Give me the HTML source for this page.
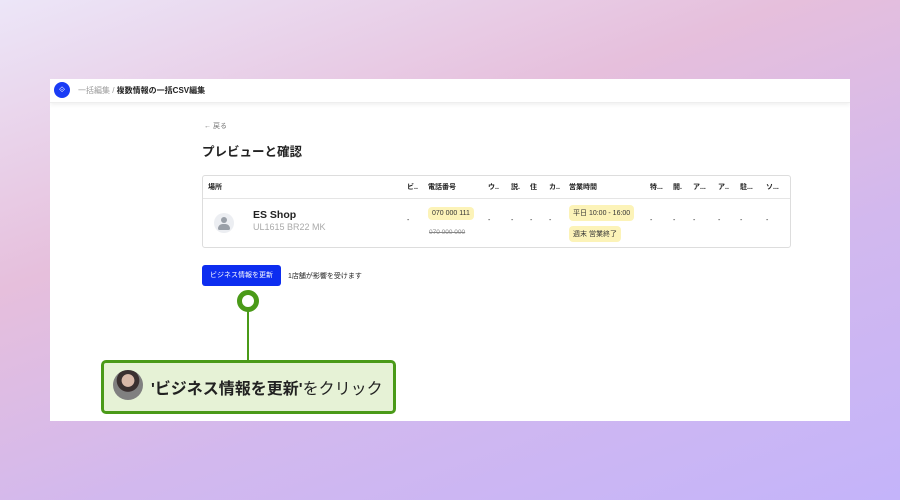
<!DOCTYPE html><html><head><meta charset="utf-8"><style>
*{margin:0;padding:0;box-sizing:border-box}
body{width:900px;height:500px;overflow:hidden;font-family:"Liberation Sans","Noto Sans CJK JP",sans-serif;background:linear-gradient(160deg,#ece6f8 0%,#e6bfdc 35%,#d2b8ee 65%,#c4b4fa 100%);position:relative}
.win{position:absolute;left:50px;top:79px;width:800px;height:342px;background:#fff;overflow:hidden}
.hdr{height:24px;border-bottom:1px solid #eee;box-shadow:0 2px 4px rgba(0,0,0,.06);position:relative;font-size:8px}
.logo{position:absolute;left:4px;top:3px;width:16px;height:16px;border-radius:50%;background:#1a3cf5;color:#fff;font-size:8px;text-align:center;line-height:16px}
.bc{position:absolute;left:28px;top:6px;color:#999}
.bc b{color:#222}
.a{position:absolute;font-size:7px;color:#222;white-space:nowrap}
.h{font-weight:bold}
.tbl{position:absolute;left:152px;top:96px;width:589px;height:73px;border:1px solid #ddd;border-radius:3px}
.hl{position:absolute;left:0;right:0;top:22px;border-top:1px solid #e5e5e5}
.pill{position:absolute;background:#fcf3b8;border-radius:4px;font-size:7px;padding:3px 4px;color:#333;white-space:nowrap}
</style></head><body>
<div class="win">
<div class="hdr"><div class="logo">⟐</div><div class="bc">一括編集 / <b>複数情報の一括CSV編集</b></div></div>
<div class="a" style="left:154px;top:42px;color:#777">← 戻る</div>
<div class="a" style="left:152px;top:62px;font-size:12.5px;font-weight:bold">プレビューと確認</div>
<div class="tbl"><div class="hl"></div></div>
<div class="a h" style="left:158px;top:103px">場所</div>
<div class="a h" style="left:357px;top:103px">ビ..</div>
<div class="a h" style="left:378px;top:103px">電話番号</div>
<div class="a h" style="left:438px;top:103px">ウ..</div>
<div class="a h" style="left:461px;top:103px">説.</div>
<div class="a h" style="left:480px;top:103px">住</div>
<div class="a h" style="left:499px;top:103px">カ..</div>
<div class="a h" style="left:519px;top:103px">営業時間</div>
<div class="a h" style="left:600px;top:103px">特...</div>
<div class="a h" style="left:623px;top:103px">開.</div>
<div class="a h" style="left:643px;top:103px">ア...</div>
<div class="a h" style="left:668px;top:103px">ア..</div>
<div class="a h" style="left:690px;top:103px">駐...</div>
<div class="a h" style="left:716px;top:103px">ソ...</div>
<div style="position:absolute;left:164px;top:134px;width:20px;height:20px;border-radius:50%;background:#eceef2"><div style="position:absolute;left:7px;top:4px;width:6px;height:6px;border-radius:50%;background:#9aa0a8"></div><div style="position:absolute;left:4px;top:11px;width:12px;height:6px;border-radius:6px 6px 2px 2px;background:#9aa0a8"></div></div>
<div class="a" style="left:203px;top:130px;font-size:10.5px;font-weight:bold">ES Shop</div>
<div class="a" style="left:203px;top:143px;font-size:9px;color:#aaa">UL1615 BR22 MK</div>
<div class="pill" style="left:378px;top:128px">070 000 111</div>
<div class="a" style="left:379px;top:150px;color:#888;text-decoration:line-through;font-size:6.5px">070 000 000</div>
<div class="pill" style="left:519px;top:126px">平日 10:00 - 16:00</div>
<div class="pill" style="left:519px;top:147px">週末 営業終了</div>
<div class="a" style="left:357px;top:138px">-</div><div class="a" style="left:438px;top:138px">-</div><div class="a" style="left:461px;top:138px">-</div><div class="a" style="left:480px;top:138px">-</div><div class="a" style="left:499px;top:138px">-</div>
<div class="a" style="left:600px;top:138px">-</div><div class="a" style="left:623px;top:138px">-</div><div class="a" style="left:643px;top:138px">-</div><div class="a" style="left:668px;top:138px">-</div><div class="a" style="left:690px;top:138px">-</div><div class="a" style="left:716px;top:138px">-</div>
<div style="position:absolute;left:152px;top:186px;width:79px;height:21px;background:#0d2df0;border-radius:3px;color:#fff;font-size:7px;text-align:center;line-height:21px">ビジネス情報を更新</div>
<div class="a" style="left:238px;top:192px">1店舗が影響を受けます</div>
<div style="position:absolute;left:197px;top:228px;width:2px;height:55px;background:#4a9a18"></div>
<div style="position:absolute;left:187px;top:211px;width:22px;height:22px;border-radius:50%;background:#fff;border:5px solid #4a9a18"></div>
<div style="position:absolute;left:51px;top:281px;width:295px;height:54px;background:#e6f2d6;border:3px solid #4a9a18;border-radius:5px"></div>
<div style="position:absolute;left:63px;top:291px;width:30px;height:30px;border-radius:50%;background:radial-gradient(circle at 50% 35%,#d8b8a8 0 25%,#3a3030 27% 45%,#808080 47%)"></div>
<div class="a" style="left:101px;top:296px;font-size:16px;color:#222"><b>'ビジネス情報を更新'</b>をクリック</div>
</div>
</body></html>
